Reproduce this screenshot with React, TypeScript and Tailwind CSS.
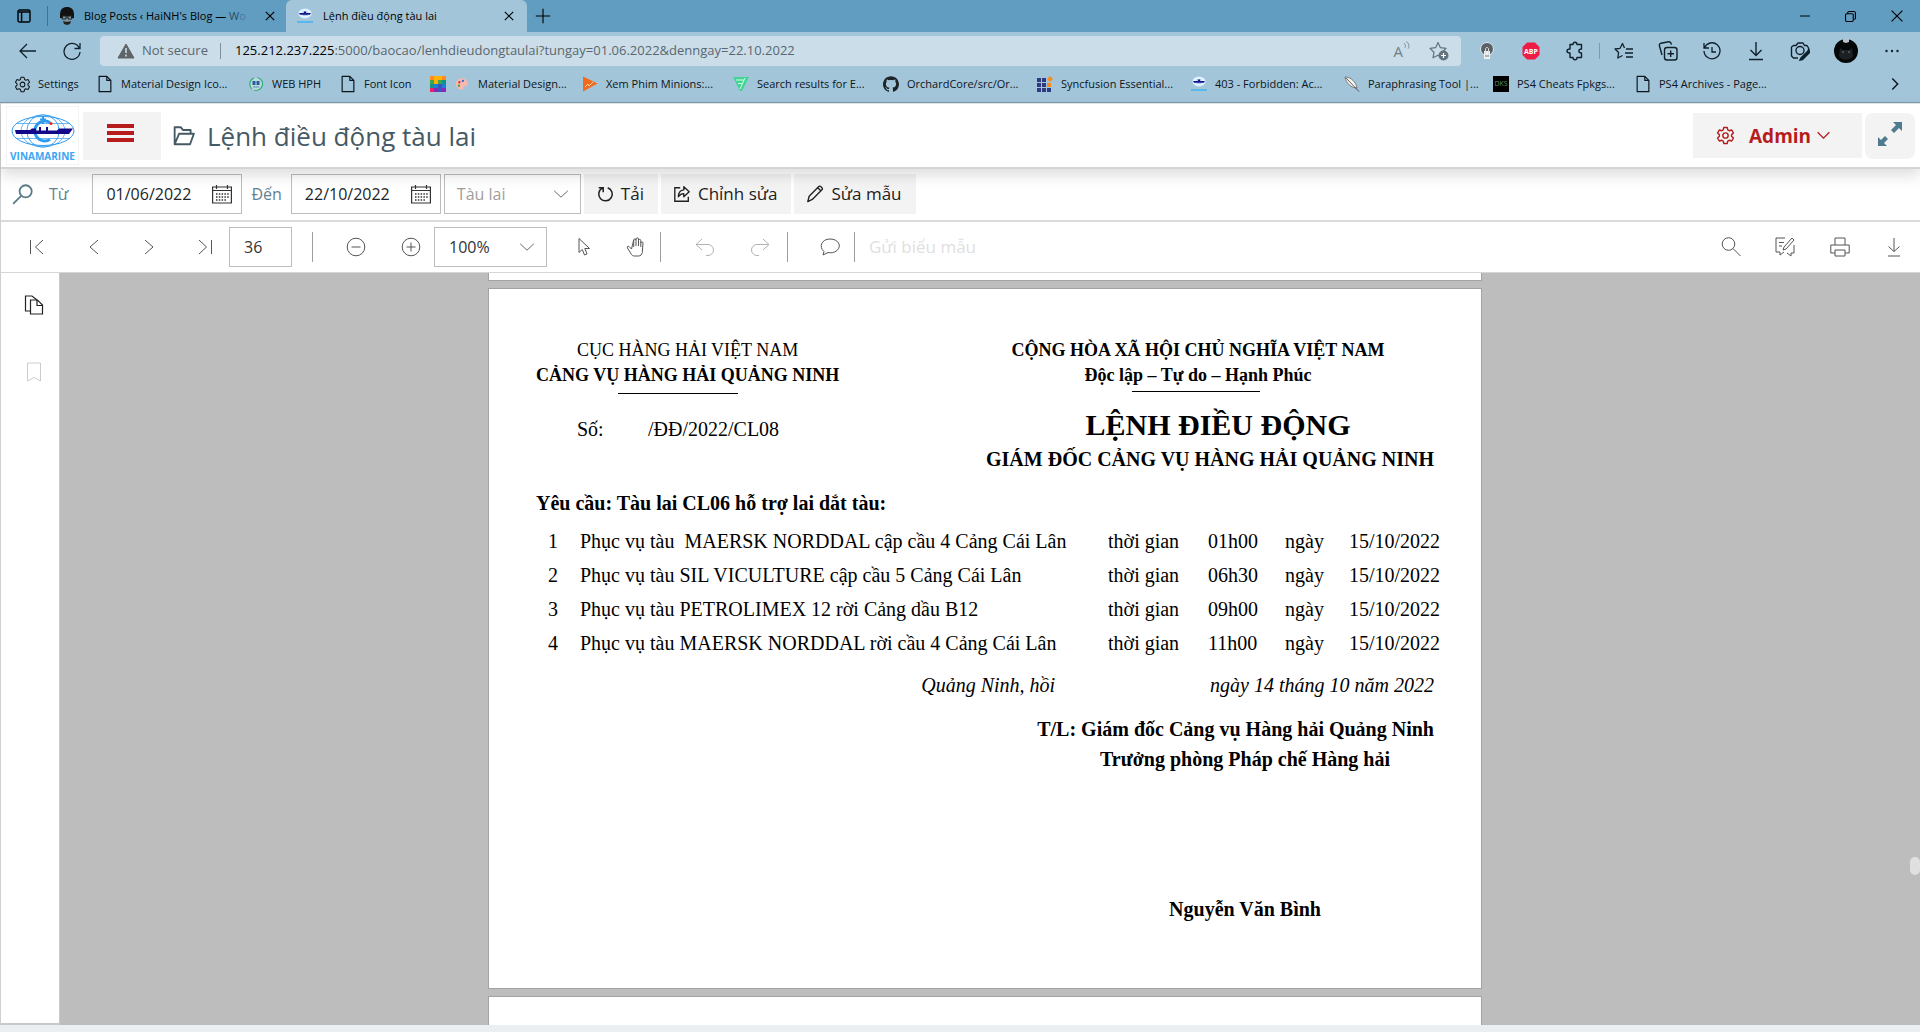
import type { ReactNode } from "react";
import clsx from "clsx";
import { SiGithub } from "react-icons/si";

function Icon({
  children,
  size = 20,
  width = 1,
  className,
}: {
  children: ReactNode;
  size?: number;
  width?: number;
  className?: string;
}) {
  return (
    <svg
      width={size}
      height={size}
      viewBox="0 0 20 20"
      fill="none"
      stroke="currentColor"
      strokeWidth={width}
      className={clsx("shrink-0", className)}
      aria-hidden="true"
    >
      {children}
    </svg>
  );
}

function Chevron({ className }: { className?: string }) {
  return (
    <Icon size={16} className={className}>
      <path d="M1.5 6 10 14l8.500-8" />
    </Icon>
  );
}

function GearIcon({ size = 20, width = 1.2 }: { size?: number; width?: number }) {
  return (
    <Icon size={size} width={width}>
      <path
        strokeLinejoin="round"
        d="M8.2 1.5h3.6l.6 2.6 1.5.9 2.6-.8 1.8 3.1-1.9 1.9v1.6l1.9 1.9-1.8 3.1-2.6-.8-1.5.9-.6 2.6H8.2l-.6-2.6-1.5-.9-2.6.8-1.8-3.1 1.9-1.9V9.2L1.7 7.3l1.8-3.1 2.6.8 1.5-.9z"
      />
      <circle cx="10" cy="10" r="2.8" />
    </Icon>
  );
}

function FileIcon() {
  return (
    <Icon size={18} width={1.3}>
      <path strokeLinejoin="round" d="M4 1.500h8l4.500 4.500v12.500h-13v-17zM12 1.500V6h4.500" />
    </Icon>
  );
}

function ShipMark() {
  return (
    <svg width="16" height="16" viewBox="0 0 16 16" aria-hidden="true">
      <ellipse cx="8" cy="5.500" rx="6.500" ry="4.800" fill="#e9f5ff" stroke="#b5dcf6" strokeWidth=".6" />
      <path d="M5.500 3h5v5h-5z" fill="#2a8be0" opacity=".35" />
      <path d="M2 5h5V3.500h2V5h5l-1.200 1.700H3z" fill="#14148c" />
      <path d="M0 13h16v2H0z" fill="#5cb6ee" />
    </svg>
  );
}

function Logo() {
  return (
    <a
      href="#home"
      className="flex w-[73px] flex-col items-center border border-gray-100 pt-[7px] text-[#3aa6f5]"
    >
      <svg width="64" height="34" viewBox="0 0 64 34" fill="none" stroke="#2f9bf0" aria-hidden="true">
        <ellipse cx="32" cy="17" rx="31" ry="14.500" />
        <circle cx="32" cy="17" r="16.200" strokeWidth=".9" />
        <ellipse cx="32" cy="17" rx="22" ry="16" strokeWidth=".7" />
        <path d="M5 9.500h54M5 24.500h54" strokeWidth=".7" />
        <path d="M39 8.500a10 10 0 1 0 0 17" strokeWidth="3" />
        <path d="M32 2v8M29 5.500h6" strokeWidth="2" />
        <path
          d="M4 16h15l2-1.500h4v2h3V13h2v3.500h5V13h2v3.500h9l2-2h14l-4 5.500H5z"
          fill="#14088a"
          stroke="none"
        />
        <circle cx="40" cy="9.500" r="1.500" fill="#f01c1c" stroke="none" />
      </svg>
      <span className="text-[10px] leading-4 font-bold">VINAMARINE</span>
    </a>
  );
}

const bookmarks: { label: string; width: string; icon: ReactNode }[] = [
  { label: "Settings", width: "w-[83px]", icon: <GearIcon size={17} /> },
  { label: "Material Design Ico...", width: "w-[151px]", icon: <FileIcon /> },
  {
    label: "WEB HPH",
    width: "w-[92px]",
    icon: (
      <svg width="16" height="16" viewBox="0 0 16 16">
        <circle cx="8" cy="8" r="6" fill="#b9d9dd" />
        <path d="M9.500 1.500a6.500 6.500 0 0 1-3 12.800M6 2A6.500 6.500 0 0 0 4 13" fill="none" stroke="#35b07c" strokeWidth="1.200" />
        <path d="M4.500 5h3v4h-3zM8.500 5h3v4h-3z" fill="#2b5f9c" />
        <path d="M5 11h6" stroke="#5b8fb9" />
      </svg>
    ),
  },
  { label: "Font Icon", width: "w-[90px]", icon: <FileIcon /> },
  {
    label: "",
    width: "w-6",
    icon: (
      <svg width="16" height="16" viewBox="0 0 16 16">
        <path d="M0 0h16v16H0z" fill="#ffb300" />
        <path d="M0 0h4v4H0zM12 0h4v4h-4z" fill="#ff8a1e" />
        <path d="M8 4h4v4H8zM0 4h4v4H0z" fill="#3da64a" />
        <path d="M12 4h4v4h-4zM0 8h4v4H0z" fill="#119488" />
        <path d="M4 8h4v4H4zM12 8h4v4h-4z" fill="#1b7fd6" />
        <path d="M8 8h4v8H8z" fill="#3c55b8" />
        <path d="M0 12h4v4H0z" fill="#ef1f62" />
        <path d="M4 12h4v4H4zM12 12h4v4h-4z" fill="#8b26b5" />
      </svg>
    ),
  },
  {
    label: "Material Design...",
    width: "w-32",
    icon: (
      <svg width="14" height="14" viewBox="0 0 16 16">
        <path d="M8 1.500a6.500 6.500 0 0 1 6.500 6c0 4-4 2-4.500 4s-1 3-3 3a6.500 6.500 0 0 1 1-13z" fill="#f7b9ae" />
        <circle cx="5" cy="6" r="1.300" fill="#d7263d" />
        <circle cx="9" cy="4.500" r="1.300" fill="#2a6fd0" />
        <circle cx="4.500" cy="10" r="1.300" fill="#37a04a" />
      </svg>
    ),
  },
  {
    label: "Xem Phim Minions:...",
    width: "w-[151px]",
    icon: (
      <svg width="16" height="16" viewBox="0 0 16 16">
        <path d="M1 .5 15.500 7.500 1 15.500z" fill="#f26a1b" />
        <path d="m3 11 3-3 1 2 4-4" fill="none" stroke="#ffd0a8" />
      </svg>
    ),
  },
  {
    label: "Search results for E...",
    width: "w-[150px]",
    icon: (
      <svg width="16" height="16" viewBox="0 0 16 16">
        <path d="M0 1h16L9 15H7z" fill="#3fd694" />
        <path d="M3 4h8M5 7.500h4M12 2 7 13" stroke="#d9fbeb" fill="none" />
      </svg>
    ),
  },
  { label: "OrchardCore/src/Or...", width: "w-[154px]", icon: <SiGithub size={16} color="#1f2328" /> },
  {
    label: "Syncfusion Essential...",
    width: "w-[154px]",
    icon: (
      <svg width="16" height="16" viewBox="0 0 16 16">
        <path d="M0 2h4v4H0zM5 2h4v4H5zM0 7h4v4H0zM5 7h4v4H5zM0 12h4v4H0zM5 12h4v4H5zM10 12h4v4h-4z" fill="#2f3a80" />
        <path d="M10 7h4v4h-4zM13 0l3 3-3 3-3-3z" fill="#f68b1f" />
      </svg>
    ),
  },
  { label: "403 - Forbidden: Ac...", width: "w-[153px]", icon: <ShipMark /> },
  {
    label: "Paraphrasing Tool |...",
    width: "w-[149px]",
    icon: (
      <svg width="16" height="16" viewBox="0 0 16 16">
        <path d="M1 1c6 0 11 5 12 11C7 12 2 7 1 1z" fill="#f4f4f0" stroke="#555" strokeWidth=".7" />
        <path d="m2 2 13 13.500" stroke="#333" strokeWidth=".8" />
      </svg>
    ),
  },
  {
    label: "PS4 Cheats Fpkgs...",
    width: "w-[142px]",
    icon: (
      <span className="flex h-4 w-4 items-center justify-center bg-black text-[7px] text-[#5f8f58]">DKS</span>
    ),
  },
  { label: "PS4 Archives - Page...", width: "w-[150px]", icon: <FileIcon /> },
];

function TabStrip() {
  return (
    <div className="flex h-8 items-center bg-[#619dc1] text-[11px] text-black">
      <button aria-label="Tab actions" className="flex h-5 w-12 items-center justify-center border-r border-[#41748f]">
        <Icon size={16} width={1.8}>
          <rect x="2.500" y="2.500" width="15" height="15" rx="2" />
          <path d="M3 5h14M7 5v12" />
        </Icon>
      </button>
      <div className="flex w-[238px] items-center">
        <svg className="ml-2.5" width="18" height="18" viewBox="0 0 18 18" aria-hidden="true">
          <path d="M2 8C2 2 5 0 9 0s7 2 7 8v3H2z" fill="#111" />
          <path d="M5 9h8v5l-4 3-4-3z" fill="#7d97a5" />
          <path d="M4 9h4v3H4zM10 9h4v3h-4zM8 10h2" fill="none" stroke="#222" />
          <path d="M5 14c2 1 6 1 8 0l-1 3-3 1-3-1z" fill="#222" />
        </svg>
        <span className="ml-2 w-[174px] whitespace-nowrap">
          Blog Posts ‹ HaiNH's Blog — <span className="text-[#2c4e62]">W</span>
          <span className="text-[#4a7a98]">o</span>
        </span>
        <button aria-label="Close Blog Posts" className="ml-1.5">
          <Icon size={12} width={2}>
            <path d="m3 3 14 14M17 3 3 17" />
          </Icon>
        </button>
      </div>
      <div className="flex h-8 w-[241px] items-center rounded-t-md bg-[#a3c5da] pl-[11px]">
        <ShipMark />
        <span className="ml-2.5 flex-1">Lệnh điều động tàu lai</span>
        <button aria-label="Close Lệnh điều động tàu lai" className="mr-3">
          <Icon size={12} width={2}>
            <path d="m3 3 14 14M17 3 3 17" />
          </Icon>
        </button>
      </div>
      <button aria-label="New tab" className="ml-2">
        <Icon size={16} width={1.4}>
          <path d="M10 1v18M1 10h18" />
        </Icon>
      </button>
      <div className="ml-auto flex items-center gap-[35px] pr-[17px]">
        <button aria-label="Minimize">
          <Icon size={10} width={2}>
            <path d="M0 10h20" />
          </Icon>
        </button>
        <button aria-label="Restore">
          <Icon size={11} width={2}>
            <rect x="1" y="5" width="14" height="14" rx="2" />
            <path d="M5 5V3c0-1 1-2 2-2h9c2 0 3 1 3 3v9c0 1-1 2-3 2" />
          </Icon>
        </button>
        <button aria-label="Close window">
          <Icon size={12} width={2}>
            <path d="m1 1 18 18M19 1 1 19" />
          </Icon>
        </button>
      </div>
    </div>
  );
}

function AddressBar() {
  return (
    <div className="flex h-[38px] items-center text-[#10202b]">
      <button aria-label="Back" className="ml-[18px]">
        <Icon width={1.3}>
          <path d="M18 10H2M9 3l-7 7 7 7" />
        </Icon>
      </button>
      <button aria-label="Refresh" className="ml-6">
        <Icon width={1.3}>
          <path d="M17.500 7.500A8 8 0 1 0 18 11M18 2v5.500h-5.500" />
        </Icon>
      </button>
      <div className="ml-[18px] flex h-[30px] flex-1 items-center rounded-sm bg-[#cadde9] pl-[17px] text-[13px] text-[#5a676f]">
        <svg width="18" height="16" viewBox="0 0 18 16" aria-hidden="true">
          <path d="M9 1 17 15H1z" fill="#5f6468" stroke="#5f6468" strokeLinejoin="round" />
          <path d="M9 5v5M9 11.500v2" stroke="#cadde9" strokeWidth="1.600" />
        </svg>
        <span className="ml-[7px] w-[70px] whitespace-nowrap">Not secure</span>
        <span className="ml-2 h-4 w-px bg-[#7f8f9a]" />
        <div role="textbox" aria-label="Address" className="ml-3.5 flex-1 whitespace-nowrap">
          <span className="text-black">125.212.237.225</span>
          :5000/baocao/lenhdieudongtaulai?tungay=01.06.2022&amp;denngay=22.10.2022
        </div>
        <button aria-label="Read aloud" className="mr-[18px] flex items-start text-[15px] leading-5 text-[#70808a]">
          A
          <Icon size={8} width={2}>
            <path d="M2 5c5 3 5 8 3 12M8 1c8 5 8 13 5 18" />
          </Icon>
        </button>
        <button aria-label="Add to favorites" className="mr-3">
          <Icon width={1.2} className="text-[#63727c]">
            <path strokeLinejoin="round" d="m9 1.500 2.400 5.200 5.600.7-4 3.800 1 5.600L9 14.200l-5 2.600 1-5.600-4-3.800 5.600-.7z" />
            <circle cx="14.500" cy="14.500" r="5" fill="#63727c" stroke="none" />
            <path d="M14.500 12v5M12 14.500h5" stroke="#fff" />
          </Icon>
        </button>
      </div>
      <div className="ml-4 flex items-center gap-6">
        <button aria-label="Bulb extension">
          <svg width="20" height="20" viewBox="0 0 20 20">
            <circle cx="10" cy="8" r="6.500" fill="#5b6166" stroke="#dfe8ec" />
            <path d="M7 10h6v8H7z" fill="#eef1f2" />
            <path d="M8.500 15V8c0-2 3-2 3 0v7" stroke="#ddd" fill="none" />
            <path d="M8 15h4" stroke="#777" />
          </svg>
        </button>
        <button aria-label="Adblock">
          <svg width="20" height="20" viewBox="0 0 20 20">
            <path d="M6 1.500h8L18.500 6v8L14 18.500H6L1.500 14V6z" fill="#ed1e45" />
            <text x="10" y="12.500" textAnchor="middle" fontSize="7" fontWeight="700" fill="#fff">
              ABP
            </text>
          </svg>
        </button>
        <button aria-label="Extensions">
          <Icon width={1.4}>
            <path
              strokeLinejoin="round"
              d="M5 3.500h3c0-3 4-3 4 0h4.500V8c-3.500 0-3.500 4 0 4v4.500H12c0 3-4 3-4 0H5V12c-4 0-4-4 0-4z"
            />
          </Icon>
        </button>
      </div>
      <span className="mx-3.5 h-4 w-px bg-[#7d9bae]" />
      <div className="flex items-center gap-6">
        <button aria-label="Favorites">
          <Icon width={1.3}>
            <path strokeLinejoin="round" d="M10.500 7 8.500 2.500 6 7.300l-5 .7 3.600 3.500-.8 5.500 4.700-2.500M12 8h7M11 12h8M12 16h7" />
          </Icon>
        </button>
        <button aria-label="Collections">
          <Icon width={1.4}>
            <rect x="6.500" y="6.500" width="12.500" height="12.500" rx="2.500" />
            <path d="M12.700 9.500v6.500M9.500 12.700H16M4 14 1.500 5C1 3.500 2 2.500 3 2.200l7.500-1.500c1.500-.2 2.500.5 3 3" />
          </Icon>
        </button>
        <button aria-label="History">
          <Icon width={1.3}>
            <path d="M2 2v5h5M2.500 7a8 8 0 1 1-.5 3M10 6v5h4" />
          </Icon>
        </button>
        <button aria-label="Downloads">
          <Icon width={1.4}>
            <path d="M10 1v13M4.500 9l5.500 5.500L15.500 9M3 18.500h14" />
          </Icon>
        </button>
        <button aria-label="Web capture">
          <Icon width={1.4}>
            <path strokeLinejoin="round" d="M8 17H3.500L1.500 15V6l2-1.500H6L8 2h5l1.500 2.500H17L18.500 7v3" />
            <circle cx="10" cy="9.500" r="4" />
            <path d="m19 9-8 8-1 2 2.500-.5 7-7z" fill="currentColor" />
          </Icon>
        </button>
        <button aria-label="Profile">
          <svg width="24" height="24" viewBox="0 0 24 24">
            <circle cx="12" cy="12" r="12" fill="#050607" />
            <path d="M9 0h6v3l-3 1-3-1z" fill="#b8c2c8" />
            <path d="M6 9 5 17c2 5 12 5 14 0l-1-8-3 2H9z" fill="#1c2022" />
            <circle cx="9" cy="13" r=".8" fill="#889" />
            <circle cx="15" cy="13" r=".8" fill="#889" />
          </svg>
        </button>
        <button aria-label="More" className="mr-[18px]">
          <svg width="20" height="20" viewBox="0 0 20 20" fill="currentColor">
            <circle cx="4.500" cy="10" r="1.200" />
            <circle cx="10" cy="10" r="1.200" />
            <circle cx="15.500" cy="10" r="1.200" />
          </svg>
        </button>
      </div>
    </div>
  );
}

function BookmarksBar() {
  return (
    <nav className="flex h-8 items-center pb-1 pl-3.5 text-[11px] text-[#0c151b]">
      {bookmarks.map((b, i) => (
        <a key={i} href="#bookmark" aria-label={b.label || "Colors"} className={clsx("flex items-center gap-2", b.width)}>
          <span className="flex w-4 shrink-0 justify-center">{b.icon}</span>
          {b.label && <span className="whitespace-nowrap">{b.label}</span>}
        </a>
      ))}
      <button aria-label="More bookmarks" className="mr-4 ml-auto">
        <Icon size={18} width={1.6}>
          <path d="m7 4 6 6-6 6" />
        </Icon>
      </button>
    </nav>
  );
}

function DateField({ id, label, value }: { id: string; label: string; value: string }) {
  return (
    <>
      <label htmlFor={id} className="text-base text-[#648190]">
        {label}
      </label>
      <div className="flex h-10 w-[150px] items-center border border-[#bdbdbd]">
        <input id={id} defaultValue={value} className="w-[119px] pl-[13px] text-base text-[#212529] outline-none" />
        <button aria-label={"Chọn ngày " + label}>
          <Icon className="text-[#333]" width={1.2}>
            <path d="M.6 3h18.800v16H.6zM.6 6.500h18.800M4.500 1v4M15.500 1v4" />
            <path d="M4 10h13M4 13h13M4 16h10" strokeDasharray="1.500 1.300" strokeWidth={1.500} />
          </Icon>
        </button>
      </div>
    </>
  );
}

function AppHeader() {
  return (
    <header className="relative z-10 flex items-center border-y-2 border-t border-b-[#d4d4d4] border-t-[#dfe3e5] bg-white px-[5px] py-0.5 shadow-[0_6px_14px_rgba(0,0,0,0.14)]">
      <Logo />
      <button aria-label="Menu" className="ml-1 flex h-12 w-[78px] items-center justify-center bg-[#f3f3f3] pr-1 pb-1.5">
        <svg width="27" height="18" viewBox="0 0 27 18" fill="#b71c1c">
          <path d="M0 0h27v4H0zM0 7h27v4H0zM0 14h27v4H0z" />
        </svg>
      </button>
      <h1 className="ml-3 flex items-center gap-3 text-[26px] leading-10 font-medium text-[#455a64]">
        <Icon size={22} width={1.7}>
          <path strokeLinejoin="round" d="M1.500 17.500V2h5.500l2 2.500h7V8M1.500 17.500 5.500 8H19l-3.500 9.500z" />
        </Icon>
        Lệnh điều động tàu lai
      </h1>
      <button className="ml-auto flex h-[45px] w-[169px] items-center bg-[#f3f3f3] pl-[23px] text-[19px] font-bold text-[#b71c1c]">
        <GearIcon size={19} width={1.5} />
        <span className="mr-1.5 ml-3.5 pt-0.5">Admin</span>
        <Icon size={13} width={2}>
          <path d="m1 5 9 9 9-9" />
        </Icon>
      </button>
      <button aria-label="Toàn màn hình" className="ml-[3px] flex h-[46px] w-[50px] items-center justify-center rounded-lg bg-[#f3f3f3] pb-1 text-[#4f7a90]">
        <svg width="24" height="24" viewBox="0 0 24 24" fill="currentColor">
          <path d="M15 0h9v9l-3-3-5 5-3-3 5-5z" />
          <path d="M0 24V15l3 3 4-4 3 3-4 4 3 3z" />
        </svg>
      </button>
    </header>
  );
}

function FilterBar() {
  const btn = "flex h-10 items-center gap-[7px] bg-[#f3f3f3] pr-3.5 pl-3 text-[17px] font-medium text-[#212121]";
  return (
    <form className="flex items-center border-b-2 border-[#dadada] pt-[5px] pb-1.5 pl-[11px]">
      <Icon size={21} width={1.7} className="text-[#5b7a89]">
        <circle cx="13" cy="7" r="5.800" />
        <path d="m9 11-8 8" />
      </Icon>
      <div className="ml-4 flex items-center gap-[9px]">
        <div className="flex items-center gap-6">
          <DateField id="from" label="Từ" value="01/06/2022" />
        </div>
        <DateField id="to" label="Đến" value="22/10/2022" />
      </div>
      <div className="relative ml-[3px]">
        <select aria-label="Tàu lai" className="h-10 w-[137px] appearance-none border border-[#bdbdbd] bg-white pl-3 text-base text-[#9e9e9e]">
          <option>Tàu lai</option>
        </select>
        <Chevron className="pointer-events-none absolute top-3 right-3 text-[#444]" />
      </div>
      <div className="ml-[3px] flex gap-[3px]">
        <button type="button" className={btn}>
          <Icon size={18} width={1.7}>
            <path d="M7 3.500A7.500 7.500 0 1 0 13 3M3 3h5v5" />
          </Icon>
          Tải
        </button>
        <button type="button" className={btn}>
          <Icon size={18} width={1.5}>
            <path d="M8 3H2v15h15v-5" />
            <path strokeLinejoin="round" d="M12 2v3.500C8 6 6 9 6 13c2-3 4-3.500 6-3.500V13l6-5.500z" />
          </Icon>
          Chỉnh sửa
        </button>
        <button type="button" className={btn}>
          <Icon size={18} width={1.5}>
            <path strokeLinejoin="round" d="M3.500 12.500 14.500 1.500c1.500-.8 4.500 2 3.500 3.500L7 16l-5 2.500zM13 3l4 4" />
          </Icon>
          Sửa mẫu
        </button>
      </div>
    </form>
  );
}

function ToolButton({
  label,
  className,
  children,
}: {
  label: string;
  className?: string;
  children: ReactNode;
}) {
  return (
    <button aria-label={label} className={clsx("flex h-10 items-center justify-center", className)}>
      <Icon>{children}</Icon>
    </button>
  );
}

function Divider() {
  return <span className="h-[30px] w-px bg-[#9e9e9e]" />;
}

function ViewerToolbar() {
  return (
    <div role="toolbar" className="flex items-center border-b border-[#d6d6d6] py-[5px] pl-2 text-[#555]">
      <ToolButton label="Trang đầu" className="w-14">
        <path d="M3.500 3v14M16 3l-7.500 7 7.500 7" />
      </ToolButton>
      <ToolButton label="Trang trước" className="w-14">
        <path d="m15 3-8 7 8 7" />
      </ToolButton>
      <ToolButton label="Trang sau" className="w-14">
        <path d="m6 3 8 7-8 7" />
      </ToolButton>
      <ToolButton label="Trang cuối" className="w-[52px]">
        <path d="m6 3 7.500 7L6 17M18.500 3v14" />
      </ToolButton>
      <input aria-label="Số trang" defaultValue="36" className="h-10 w-[63px] border border-[#bdbdbd] pl-3.5 text-base text-[#333] outline-none" />
      <div className="flex w-[41px] justify-center">
        <Divider />
      </div>
      <ToolButton label="Thu nhỏ" className="w-[46px]">
        <circle cx="10" cy="10" r="8.800" />
        <path d="M5.500 10h9" />
      </ToolButton>
      <ToolButton label="Phóng to" className="ml-4 w-8">
        <circle cx="10" cy="10" r="8.800" />
        <path d="M5.500 10h9M10 5.500v9" />
      </ToolButton>
      <div className="relative ml-[7px]">
        <select aria-label="Thu phóng" className="h-10 w-[113px] appearance-none border border-[#bdbdbd] bg-white pl-3.5 text-base text-[#333]">
          <option>100%</option>
        </select>
        <Chevron className="pointer-events-none absolute top-3 right-3 text-[#444]" />
      </div>
      <ToolButton label="Chọn" className="ml-[9px] w-14">
        <path strokeLinejoin="round" d="M5 1.500v14l3.300-3 2.200 5.500 2.500-1-2.200-5.500H15.500z" />
      </ToolButton>
      <ToolButton label="Kéo" className="w-12">
        <path
          strokeLinejoin="round"
          d="M5.500 12 3 9.500c-1-.8-2.300.2-1.500 1.500l4 6.500c.6 1 1.500 1.500 3 1.500h4c2 0 3.500-1.500 3.800-3.500L17 6c0-1.500-2-1.500-2.200 0V3.500c0-1.500-2.300-1.500-2.300 0V2c0-1.500-2.500-1.500-2.500 0v1c0-1.500-2.300-1.500-2.300 0L5.500 12M7.700 3v7M10 3v6M12.500 3.500V9M14.800 6v4"
        />
      </ToolButton>
      <Divider />
      <ToolButton label="Hoàn tác" className="ml-4 w-14 text-[#b3b3b3]">
        <path d="M7 2 1 7.500 7 13M1 7.500h12a5.500 5.500 0 0 1 0 11h-2" />
      </ToolButton>
      <ToolButton label="Làm lại" className="w-[54px] text-[#b3b3b3]">
        <path d="m13 2 6 5.500-6 5.500M19 7.500H7a5.500 5.500 0 0 0 0 11h2" />
      </ToolButton>
      <Divider />
      <ToolButton label="Ghi chú" className="ml-[18px] w-12">
        <path strokeLinejoin="round" d="M4 14.500C-1.500 10 1.500 2 10 2s12 7 7 11.500c-3 2.500-6 2.500-9 2L3 18z" />
      </ToolButton>
      <Divider />
      <button disabled className="ml-3.5 text-[17px] text-[#e0e0e0]">
        Gửi biểu mẫu
      </button>
      <div className="ml-auto flex">
        <ToolButton label="Tìm" className="w-[54px]">
          <circle cx="7.500" cy="7" r="6.300" />
          <path d="m12 11.500 7.500 7.500" />
        </ToolButton>
        <ToolButton label="Chú thích" className="w-[54px]">
          <path d="M10 1H1v14h4v3l4-3M19 8v8h-3v3l-4-3M4 5.500h5M4 9h3" />
          <path strokeLinejoin="round" d="m8 13 1-3 8-9 2 2-8 9z" />
        </ToolButton>
        <ToolButton label="In" className="w-14">
          <path d="M5 8V1h10v7M5 16H.8V8h18.400v8H15M5 13h10v6H5z" />
        </ToolButton>
        <ToolButton label="Tải xuống" className="w-[52px]">
          <path d="M10 1v13.500M4.500 9.500l5.500 5 5.500-5M4 19h12" />
        </ToolButton>
      </div>
    </div>
  );
}

const tasks = [
  { text: "Phục vụ tàu  MAERSK NORDDAL cập cầu 4 Cảng Cái Lân", time: "01h00" },
  { text: "Phục vụ tàu SIL VICULTURE cập cầu 5 Cảng Cái Lân", time: "06h30" },
  { text: "Phục vụ tàu PETROLIMEX 12 rời Cảng dầu B12", time: "09h00" },
  { text: "Phục vụ tàu MAERSK NORDDAL rời cầu 4 Cảng Cái Lân", time: "11h00" },
];

function OrderPage() {
  return (
    <article className="flex-none border border-[#a3a3a3] bg-white pt-[49px] pr-[39px] pb-16 pl-[47px] font-['Liberation_Serif',serif] text-[20px] leading-[30px] text-black">
      <div className="flex justify-between pr-2">
        <div>
          <div className="text-center text-[18px] leading-[25px]">
            <p>CỤC HÀNG HẢI VIỆT NAM</p>
            <p className="font-bold">CẢNG VỤ HÀNG HẢI QUẢNG NINH</p>
          </div>
          <div className="mt-[5px] ml-[82px] w-[120px] border-t border-black" />
          <p className="mt-5 ml-[41px] flex">
            <span className="w-[71px]">Số:</span>
            <span>/ĐĐ/2022/CL08</span>
          </p>
        </div>
        <div className="text-center font-bold">
          <div className="pr-6 text-[18px] leading-[25px]">
            <p>CỘNG HÒA XÃ HỘI CHỦ NGHĨA VIỆT NAM</p>
            <p>Độc lập – Tự do – Hạnh Phúc</p>
            <div className="mt-[3px] mr-1 flex justify-center">
              <span className="w-32 border-t border-black" />
            </div>
          </div>
          <h2 className="mt-3.5 pl-4 text-[30px] leading-[38px]">LỆNH ĐIỀU ĐỘNG</h2>
          <p>GIÁM ĐỐC CẢNG VỤ HÀNG HẢI QUẢNG NINH</p>
        </div>
      </div>
      <p className="mt-3.5 font-bold">Yêu cầu: Tàu lai CL06 hỗ trợ lai dắt tàu:</p>
      <table className="mt-1.5 w-full table-fixed text-left">
        <colgroup>
          <col className="w-11" />
          <col />
          <col className="w-[100px]" />
          <col className="w-[77px]" />
          <col className="w-16" />
          <col className="w-[93px]" />
        </colgroup>
        <tbody>
          {tasks.map((t, i) => (
            <tr key={t.text} className="h-[34px]">
              <td className="pl-3">{i + 1}</td>
              <td className="whitespace-pre">{t.text}</td>
              <td>thời gian</td>
              <td>{t.time}</td>
              <td>ngày</td>
              <td>15/10/2022</td>
            </tr>
          ))}
        </tbody>
      </table>
      <p className="mt-2.5 flex justify-end pr-2 italic">
        <span className="mr-[155px]">Quảng Ninh, hồi</span>
        <span>ngày 14 tháng 10 năm 2022</span>
      </p>
      <div className="mt-3.5 pr-2 text-right font-bold">
        <p>T/L: Giám đốc Cảng vụ Hàng hải Quảng Ninh</p>
        <p className="pr-11">Trưởng phòng Pháp chế Hàng hải</p>
        <p className="mt-[120px] pr-[113px]">Nguyễn Văn Bình</p>
      </div>
    </article>
  );
}

function Viewer() {
  return (
    <main className="flex min-h-0 flex-1">
      <aside className="flex w-[59px] flex-col items-center gap-[47px] border-r border-b-2 border-[#c8c8c8] bg-white pt-[22px]">
        <button aria-label="Trang thu nhỏ" className="pl-2 text-[#222]">
          <Icon width={1.2}>
            <path d="M7 16H1.500V1H8l5 4" />
            <path d="M6.500 5h7L18.500 10v9h-12zM13 5v5.500h5.500" />
          </Icon>
        </button>
        <button aria-label="Dấu trang" className="pl-2 text-[#ccc]">
          <Icon>
            <path d="M3.500 1h13v18L10 15.500 3.500 19z" />
          </Icon>
        </button>
      </aside>
      <div className="relative flex-1 overflow-hidden bg-[#bdbdbd] pr-2.5">
        <div className="mx-auto flex h-full w-[994px] flex-col gap-[7px]">
          <div className="h-2 flex-none border border-t-0 border-[#a3a3a3] bg-white" />
          <OrderPage />
          <div className="flex-1 border border-b-0 border-[#a3a3a3] bg-white" />
        </div>
        <div className="absolute top-[584px] right-0 h-[18px] w-2.5 rounded-full bg-[#e0e0e0]" />
      </div>
    </main>
  );
}

export default function App() {
  return (
    <div className="flex h-screen flex-col overflow-hidden bg-white font-['Open_Sans','Noto_Sans',sans-serif]">
      <div className="flex-none border-b border-[#7d9bad] bg-[#a3c5da]">
        <TabStrip />
        <AddressBar />
        <BookmarksBar />
      </div>
      <div className="flex min-h-0 flex-1 flex-col border-l border-[#d0d0d0]">
        <AppHeader />
        <FilterBar />
        <ViewerToolbar />
        <Viewer />
      </div>
      <footer className="h-[7px] flex-none bg-[#ebeff2]" />
    </div>
  );
}
